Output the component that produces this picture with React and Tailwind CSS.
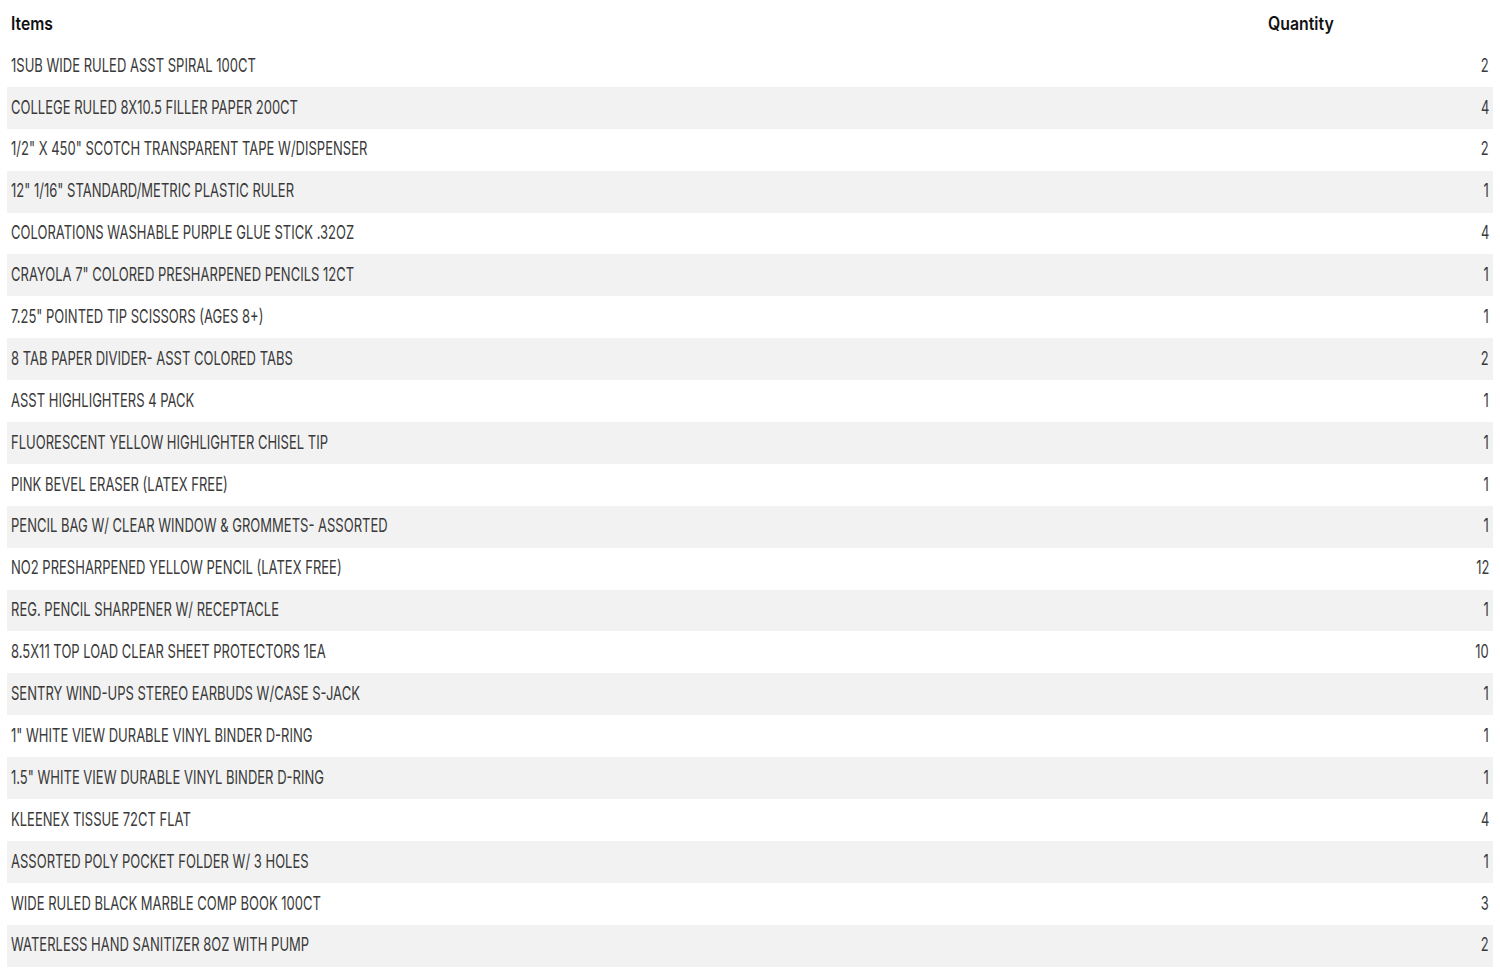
import React from 'react';

const items = [
  ['1SUB WIDE RULED ASST SPIRAL 100CT', 2],
  ['COLLEGE RULED 8X10.5 FILLER PAPER 200CT', 4],
  ['1/2" X 450" SCOTCH TRANSPARENT TAPE W/DISPENSER', 2],
  ['12" 1/16" STANDARD/METRIC PLASTIC RULER', 1],
  ['COLORATIONS WASHABLE PURPLE GLUE STICK .32OZ', 4],
  ['CRAYOLA 7" COLORED PRESHARPENED PENCILS 12CT', 1],
  ['7.25" POINTED TIP SCISSORS (AGES 8+)', 1],
  ['8 TAB PAPER DIVIDER- ASST COLORED TABS', 2],
  ['ASST HIGHLIGHTERS 4 PACK', 1],
  ['FLUORESCENT YELLOW HIGHLIGHTER CHISEL TIP', 1],
  ['PINK BEVEL ERASER (LATEX FREE)', 1],
  ['PENCIL BAG W/ CLEAR WINDOW & GROMMETS- ASSORTED', 1],
  ['NO2 PRESHARPENED YELLOW PENCIL (LATEX FREE)', 12],
  ['REG. PENCIL SHARPENER W/ RECEPTACLE', 1],
  ['8.5X11 TOP LOAD CLEAR SHEET PROTECTORS 1EA', 10],
  ['SENTRY WIND-UPS STEREO EARBUDS W/CASE S-JACK', 1],
  ['1" WHITE VIEW DURABLE VINYL BINDER D-RING', 1],
  ['1.5" WHITE VIEW DURABLE VINYL BINDER D-RING', 1],
  ['KLEENEX TISSUE 72CT FLAT', 4],
  ['ASSORTED POLY POCKET FOLDER W/ 3 HOLES', 1],
  ['WIDE RULED BLACK MARBLE COMP BOOK 100CT', 3],
  ['WATERLESS HAND SANITIZER 8OZ WITH PUMP', 2],
];

export default function App() {
  return (
    <div className="w-[1500px] h-[980px] bg-white px-[7px] font-['Inter',sans-serif]">
      <div className="flex h-[45px] items-center pt-[2px]">
        <div className="flex-1 pl-[4px]">
          <span className="inline-block origin-left scale-x-[0.87] text-[18px] font-semibold text-[#111]">Items</span>
        </div>
        <div className="w-[225px]">
          <span className="inline-block origin-left scale-x-[0.88] text-[18px] font-semibold text-[#111]">Quantity</span>
        </div>
      </div>
      {items.map(([name, qty], i) => (
        <div
          key={i}
          className={`flex h-[41.9px] items-center ${i % 2 === 1 ? 'bg-[#f2f2f2]' : 'bg-white'}`}
        >
          <div className="flex-1 pl-[4px] whitespace-nowrap">
            <span className="inline-block origin-left scale-x-[0.685] text-[19px] text-[#3a3a3a]">{name}</span>
          </div>
          <div className="pr-[4px] text-right whitespace-nowrap">
            <span className="inline-block origin-right scale-x-[0.68] text-[19px] text-[#3a3a3a]">{qty}</span>
          </div>
        </div>
      ))}
    </div>
  );
}
